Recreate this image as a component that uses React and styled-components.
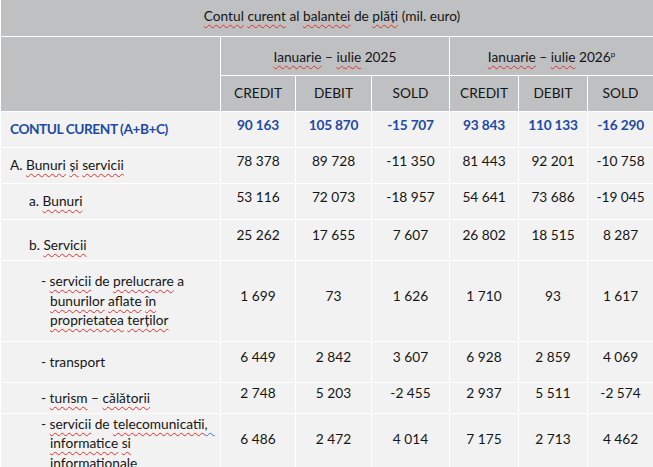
import styled, { createGlobalStyle } from "styled-components";

const GlobalStyle = createGlobalStyle`
  body {
    margin: 0;
    background: #ffffff;
    font-family: Lato, "Liberation Sans", sans-serif;
  }
`;

const Table = styled.table`
  width: 653px;
  border-collapse: collapse;
  table-layout: fixed;
  font-size: 13.7px;
  line-height: 19.5px;
  color: #151515;
`;

const Row = styled.tr`
  height: ${(p) => p.$h}px;
`;

const HeadCell = styled.th`
  background: #bfc0c2;
  border: 1px solid #ffffff;
  border-top: none;
  font-weight: 400;
  text-align: center;
  vertical-align: ${(p) => (p.$top ? "top" : "middle")};
  padding: ${(p) => p.$pad || "0"};
`;

const Label = styled.td`
  background: #f2f2f2;
  border: 1px solid #ffffff;
  vertical-align: middle;
  padding: ${(p) => p.$pt || 0}px 4px 0 ${(p) => p.$indent || 9}px;
  text-indent: ${(p) => (p.$hang ? "-9px" : "0")};
  font-weight: ${(p) => (p.$strong ? 700 : 400)};
  letter-spacing: ${(p) => (p.$strong ? "-0.45px" : "0")};
  color: ${(p) => (p.$strong ? "#1d4aa4" : "inherit")};
`;

const Num = styled.td`
  background: #f2f2f2;
  border: 1px solid #ffffff;
  text-align: center;
  vertical-align: middle;
  padding: 0 0 9px 0;
  font-weight: ${(p) => (p.$strong ? 700 : 400)};
  letter-spacing: ${(p) => (p.$strong ? "-0.2px" : "0")};
  color: ${(p) => (p.$strong ? "#1d4aa4" : "inherit")};
`;

const Wavy = styled.span`
  text-decoration: underline wavy ${(p) => (p.$blue ? "#3a6fd8" : "#e0302a")};
  text-decoration-thickness: 1px;
  text-underline-offset: 3px;
`;

const Sup = styled.sup`
  font-size: 8px;
  line-height: 0;
  vertical-align: 5px;
`;

const cols = [220, 75, 76, 78, 69, 69, 66];

const rows = [
  {
    label: (
      <>
        A. <Wavy>Bunuri</Wavy> <Wavy>și</Wavy> <Wavy>servicii</Wavy>
      </>
    ),
    h: 36,
    values: ["78 378", "89 728", "-11 350", "81 443", "92 201", "-10 758"],
  },
  {
    label: (
      <>
        a. <Wavy>Bunuri</Wavy>
      </>
    ),
    indent: 28,
    h: 36,
    values: ["53 116", "72 073", "-18 957", "54 641", "73 686", "-19 045"],
  },
  {
    label: (
      <>
        b. <Wavy>Servicii</Wavy>
      </>
    ),
    indent: 28,
    pt: 10,
    h: 41,
    values: ["25 262", "17 655", "7 607", "26 802", "18 515", "8 287"],
  },
  {
    label: (
      <>
        - <Wavy>servicii</Wavy> de <Wavy>prelucrare</Wavy> a<br />
        <Wavy>bunurilor</Wavy> <Wavy>aflate</Wavy> <Wavy>în</Wavy>
        <br />
        <Wavy>proprietatea</Wavy> <Wavy>terților</Wavy>
      </>
    ),
    indent: 49,
    hang: true,
    h: 81,
    values: ["1 699", "73", "1 626", "1 710", "93", "1 617"],
  },
  {
    label: <>- transport</>,
    indent: 40,
    h: 41,
    values: ["6 449", "2 842", "3 607", "6 928", "2 859", "4 069"],
  },
  {
    label: (
      <>
        - <Wavy>turism</Wavy> – <Wavy>călătorii</Wavy>
      </>
    ),
    indent: 40,
    h: 31,
    values: ["2 748", "5 203", "-2 455", "2 937", "5 511", "-2 574"],
  },
  {
    label: (
      <>
        - <Wavy>servicii</Wavy> de <Wavy>telecomunicatii</Wavy>
        <Wavy $blue>,&nbsp;&nbsp;</Wavy>
        <br />
        <Wavy>informatice</Wavy> <Wavy>si</Wavy>
        <br />
        <Wavy>informationale</Wavy>
      </>
    ),
    indent: 49,
    hang: true,
    h: 60,
    values: ["6 486", "2 472", "4 014", "7 175", "2 713", "4 462"],
  },
];

const totals = ["90 163", "105 870", "-15 707", "93 843", "110 133", "-16 290"];

export default function App() {
  return (
    <>
      <GlobalStyle />
      <Table>
        <colgroup>
          {cols.map((w, i) => (
            <col key={i} style={{ width: w }} />
          ))}
        </colgroup>
        <thead>
          <Row $h={36}>
            <HeadCell colSpan={7} $top $pad="6px 0 0 10px">
              <Wavy>Contul</Wavy> <Wavy>curent</Wavy> al <Wavy>balantei</Wavy> de{" "}
              <Wavy>plăți</Wavy> (mil. euro)
            </HeadCell>
          </Row>
          <Row $h={39}>
            <HeadCell rowSpan={2} />
            <HeadCell colSpan={3} $pad="3px 0 0 0">
              <Wavy>Ianuarie</Wavy> – <Wavy>iulie</Wavy> 2025
            </HeadCell>
            <HeadCell colSpan={3} $pad="3px 0 0 0">
              <Wavy>Ianuarie</Wavy> – <Wavy>iulie</Wavy> 2026<Sup>p</Sup>
            </HeadCell>
          </Row>
          <Row $h={36}>
            <HeadCell>CREDIT</HeadCell>
            <HeadCell>DEBIT</HeadCell>
            <HeadCell>SOLD</HeadCell>
            <HeadCell>CREDIT</HeadCell>
            <HeadCell>DEBIT</HeadCell>
            <HeadCell>SOLD</HeadCell>
          </Row>
        </thead>
        <tbody>
          <Row $h={36}>
            <Label $strong>CONTUL CURENT (A+B+C)</Label>
            {totals.map((v, i) => (
              <Num key={i} $strong>
                {v}
              </Num>
            ))}
          </Row>
          {rows.map((r, i) => (
            <Row key={i} $h={r.h}>
              <Label $indent={r.indent} $hang={r.hang} $pt={r.pt}>
                {r.label}
              </Label>
              {r.values.map((v, j) => (
                <Num key={j}>{v}</Num>
              ))}
            </Row>
          ))}
        </tbody>
      </Table>
    </>
  );
}
